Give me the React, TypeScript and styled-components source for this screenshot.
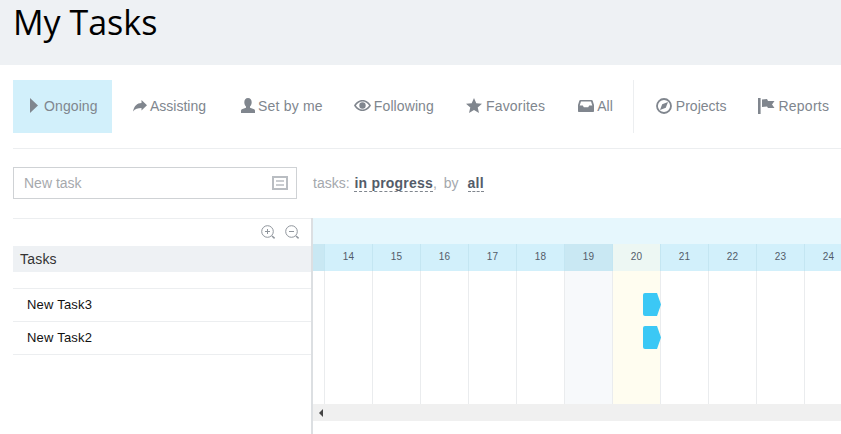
import React from "react";
import styled, { createGlobalStyle } from "styled-components";

const Global = createGlobalStyle`
  html, body { margin: 0; padding: 0; background: #fff; overflow: hidden; }
  body { font-family: "Liberation Sans", Arial, sans-serif; }
`;
const Page = styled.div`width: 841px; height: 434px; overflow: hidden;`;
const Header = styled.header`height: 65px; background: #eef1f4; box-sizing: border-box; padding: 0 0 0 13px;`;
const Title = styled.h1`
  margin: 0; font: 400 34px/44px "Open Sans", sans-serif; color: #000;
`;
const Content = styled.main`padding: 15px 0 0 13px;`;
const Tabs = styled.nav`
  display: flex; height: 68px; border-bottom: 1px solid #eceef0;
  align-items: flex-start;
`;
const Tab = styled.a<{ $ml?: number; $gap?: number; $ls?: number }>`
  display: flex; align-items: center; gap: ${p => p.$gap ?? 3}px;
  height: 53px; flex: none; box-sizing: border-box; padding-bottom: 2px;
  margin-left: ${p => p.$ml ?? 0}px;
  font-size: 14px; letter-spacing: ${p => p.$ls ?? 0}px; color: #80868e;
  svg { fill: #80868e; flex: none; }
`;
const ActiveTab = styled(Tab)`
  background: #d2f0fb; width: 99px; padding-left: 17px;
`;
const Divider = styled.span`width: 1px; height: 53px; background: #eceef0; flex: none; margin-left: 20px;`;
const Toolbar = styled.div`display: flex; align-items: center; height: 69px; padding-bottom: 2px; box-sizing: border-box;`;
const InputBox = styled.div`
  width: 284px; height: 32px; box-sizing: border-box; border: 1px solid #cfd2d5; flex: none;
  display: flex; align-items: center; justify-content: space-between;
  padding: 0 8px 0 10px; font-size: 14px; color: #a6a9ad;
`;
const Filter = styled.div`
  margin: 2px 0 0 16px; font-size: 14px; color: #a4a8ad; display: flex; align-items: baseline; white-space: pre;
`;
const Pick = styled.b<{ $ml?: number }>`
  color: #535c69; border-bottom: 1px dashed #80868e; line-height: 15px; letter-spacing: 0.2px; margin-left: ${p => p.$ml ?? 0}px;
`;
const Spaced = styled.span`margin-left: 7px;`;
const Gantt = styled.section`display: flex; height: 216px;`;
const Side = styled.div`width: 298px; flex: none; border-top: 1px solid #eceef0; height: 216px; box-sizing: border-box;`;
const Zoom = styled.div`
  height: 27px; box-sizing: border-box; display: flex; justify-content: flex-end; align-items: center; gap: 8px; padding: 0 11px 2px 0;
`;
const TasksHead = styled.div`
  height: 26px; background: #eef1f4; font-size: 14px; letter-spacing: 0.2px; line-height: 26px; padding-left: 7px; color: #333; margin-bottom: 16px;
`;
const Row = styled.div<{ $first?: boolean }>`
  height: 32px; border-top: ${p => (p.$first ? "1px solid #eceef0" : "none")};
  border-bottom: 1px solid #eceef0; font-size: 13px; letter-spacing: 0.2px; line-height: 32px; padding-left: 14px; color: #111;
`;
const Splitter = styled.div`width: 2px; flex: none; background: #dcdfe2;`;
const Chart = styled.div`flex: 1; position: relative; overflow: hidden; display: flex; flex-direction: column;`;
const Band = styled.div`height: 26px; flex: none; background: #e6f7fd;`;
const Grid = styled.div`display: flex; flex: 1;`;
const Col = styled.div<{ $w: number; $weekend?: boolean; $today?: boolean }>`
  width: ${p => p.$w}px; flex: none; box-sizing: border-box; display: flex; flex-direction: column;
  border-right: 1px solid #eaecee;
  background: ${p => (p.$today ? "#fffdf0" : p.$weekend ? "#f7f9fb" : "#fff")};
`;
const Day = styled.div<{ $weekend?: boolean; $today?: boolean }>`
  height: 27px; margin-right: -1px; box-sizing: border-box; border-right: 1px solid #c4e6f2;
  background: ${p => (p.$today ? "#edf7f3" : p.$weekend ? "#c9e8f3" : "#d2f0fb")};
  font-size: 10px; letter-spacing: 0.3px; line-height: 25px; text-align: center; color: #535c69;
`;
const Bar = styled.svg<{ $top: number }>`position: absolute; left: 330px; top: ${p => p.$top}px;`;
const Scroll = styled.div`
  position: absolute; left: 0; right: 0; top: 186px; height: 17px; background: #f0f0f0;
  display: flex; align-items: center; padding-left: 6px;
`;
const Below = styled.div`position: absolute; left: 0; right: 0; top: 203px; bottom: 0; background: #fff;`;
const Arrow = styled.span`
  width: 0; height: 0; border-style: solid; border-width: 4px 4px 4px 0; border-color: transparent #444 transparent transparent;
`;

const days = [14, 15, 16, 17, 18, 19, 20, 21, 22, 23, 24];

const Play = () => (
  <svg width="8" height="15" viewBox="0 0 8 15"><path d="M0 0l8 7.5L0 15z" /></svg>
);
const ShareIcon = () => (
  <svg width="14" height="12" viewBox="0 0 14 12"><path d="M14 5.200 8.500 0v3.100C4 3.200 1.200 6 0 11.500c2-2.700 4.800-3.500 8.500-3.500v2.600z" /></svg>
);
const UserIcon = () => (
  <svg width="14" height="15" viewBox="0 0 14 15">
    <path d="M7 0c2.300 0 3.700 1.800 3.700 4.300 0 1.900-.8 3.400-1.700 4.200v1.200l3.500 1.300c1 .4 1.500 1 1.500 2V15H0v-2c0-1 .5-1.600 1.500-2L5 9.700V8.500C4.100 7.700 3.300 6.200 3.300 4.300 3.300 1.800 4.700 0 7 0z" />
  </svg>
);
const EyeIcon = () => (
  <svg width="17" height="11" viewBox="0 0 17 11">
    <path fillRule="evenodd" d="M8.500 0C12.500 0 15.500 2.700 17 5.500 15.500 8.300 12.500 11 8.500 11S1.500 8.300 0 5.500C1.500 2.700 4.500 0 8.500 0zM8.500 1.500C5.700 1.500 3.300 3.200 1.900 5.500c1.400 2.300 3.800 4 6.600 4s5.200-1.700 6.600-4c-1.400-2.300-3.800-4-6.600-4zM8.500 2.300a3.200 3.200 0 1 1 0 6.400 3.200 3.200 0 0 1 0-6.400z" />
  </svg>
);
const StarIcon = () => (
  <svg width="16" height="15" viewBox="0 0 16 15"><path d="M8 0l2.300 5.200 5.700.5-4.300 3.800 1.300 5.500L8 12.100 3 15l1.300-5.500L0 5.700l5.700-.5z" /></svg>
);
const InboxIcon = () => (
  <svg width="16" height="12" viewBox="0 0 16 12">
    <path fillRule="evenodd" d="M2.500 0h11c.7 0 1 .3 1.200.8L16 5v6c0 .6-.4 1-1 1H1c-.6 0-1-.4-1-1V5L1.300.8C1.500.3 1.800 0 2.500 0zM3 1.500 1.700 5.500h3.100l1 1.700h4.400l1-1.700h3.100L13 1.500z" />
  </svg>
);
const CompassIcon = () => (
  <svg width="16" height="16" viewBox="0 0 16 16">
    <circle cx="8" cy="8" r="7" fill="none" stroke="#80868e" strokeWidth="1.800" />
    <path d="M12 4 9.800 9.800 4 12 6.200 6.200z" />
  </svg>
);
const FlagIcon = () => (
  <svg width="18" height="16" viewBox="0 0 18 16">
    <rect x="0" y="0" width="2.600" height="16" />
    <path d="M4 1.500 9 1l1 2h6.500L14 6.500l2.500 3.500H10L9 8.500 4 9z" />
  </svg>
);
const FormIcon = () => (
  <svg width="16" height="14" viewBox="0 0 16 14">
    <rect x="1" y="1" width="14" height="12" fill="none" stroke="#b9bdc2" strokeWidth="2" />
    <path d="M4 5h8M4 9h8" stroke="#b9bdc2" strokeWidth="1.500" />
  </svg>
);
const Lens = ({ plus }: { plus?: boolean }) => (
  <svg width="16" height="16" viewBox="0 0 16 16" fill="none" stroke="#8f959c" strokeWidth="1">
    <circle cx="7.500" cy="7.500" r="5.800" />
    <path d="M5 7.500h5" />
    {plus && <path d="M7.500 5v5" />}
    <path d="M12 12l2.600 2.400" strokeWidth="1.500" />
  </svg>
);
const TaskBar = ({ top }: { top: number }) => (
  <Bar $top={top} width="18" height="23" viewBox="0 0 18 23">
    <path d="M2 0h12l4 11.500-4 11.500H2a2 2 0 0 1-2-2V2a2 2 0 0 1 2-2z" fill="#3bc8f5" />
  </Bar>
);

export default function App() {
  return (
    <Page>
      <Global />
      <Header><Title>My Tasks</Title></Header>
      <Content>
        <Tabs>
          <ActiveTab $gap={6} $ls={0.1}><Play />Ongoing</ActiveTab>
          <Tab $ml={21}><ShareIcon />Assisting</Tab>
          <Tab $ml={35} $ls={0.2}><UserIcon />Set by me</Tab>
          <Tab $ml={31} $ls={0.1}><EyeIcon />Following</Tab>
          <Tab $ml={32} $gap={4} $ls={0.2}><StarIcon />Favorites</Tab>
          <Tab $ml={33}><InboxIcon />All</Tab>
          <Divider />
          <Tab $ml={22} $gap={4}><CompassIcon />Projects</Tab>
          <Tab $ml={32} $gap={2} $ls={0.25}><FlagIcon />Reports</Tab>
        </Tabs>
        <Toolbar>
          <InputBox>New task<FormIcon /></InputBox>
          <Filter>tasks: <Pick $ml={1}>in progress</Pick>,<Spaced>by</Spaced><Pick $ml={9}>all</Pick></Filter>
        </Toolbar>
        <Gantt>
          <Side>
            <Zoom><Lens plus /><Lens /></Zoom>
            <TasksHead>Tasks</TasksHead>
            <Row $first>New Task3</Row>
            <Row>New Task2</Row>
          </Side>
          <Splitter />
          <Chart>
            <Band />
            <Grid>
              <Col $w={12}><Day $weekend /></Col>
              {days.map(d => (
                <Col key={d} $w={48} $weekend={d === 19} $today={d === 20}>
                  <Day $weekend={d === 19} $today={d === 20}>{d}</Day>
                </Col>
              ))}
            </Grid>
            <TaskBar top={75} />
            <TaskBar top={108} />
            <Scroll><Arrow /></Scroll>
            <Below />
          </Chart>
        </Gantt>
      </Content>
    </Page>
  );
}
